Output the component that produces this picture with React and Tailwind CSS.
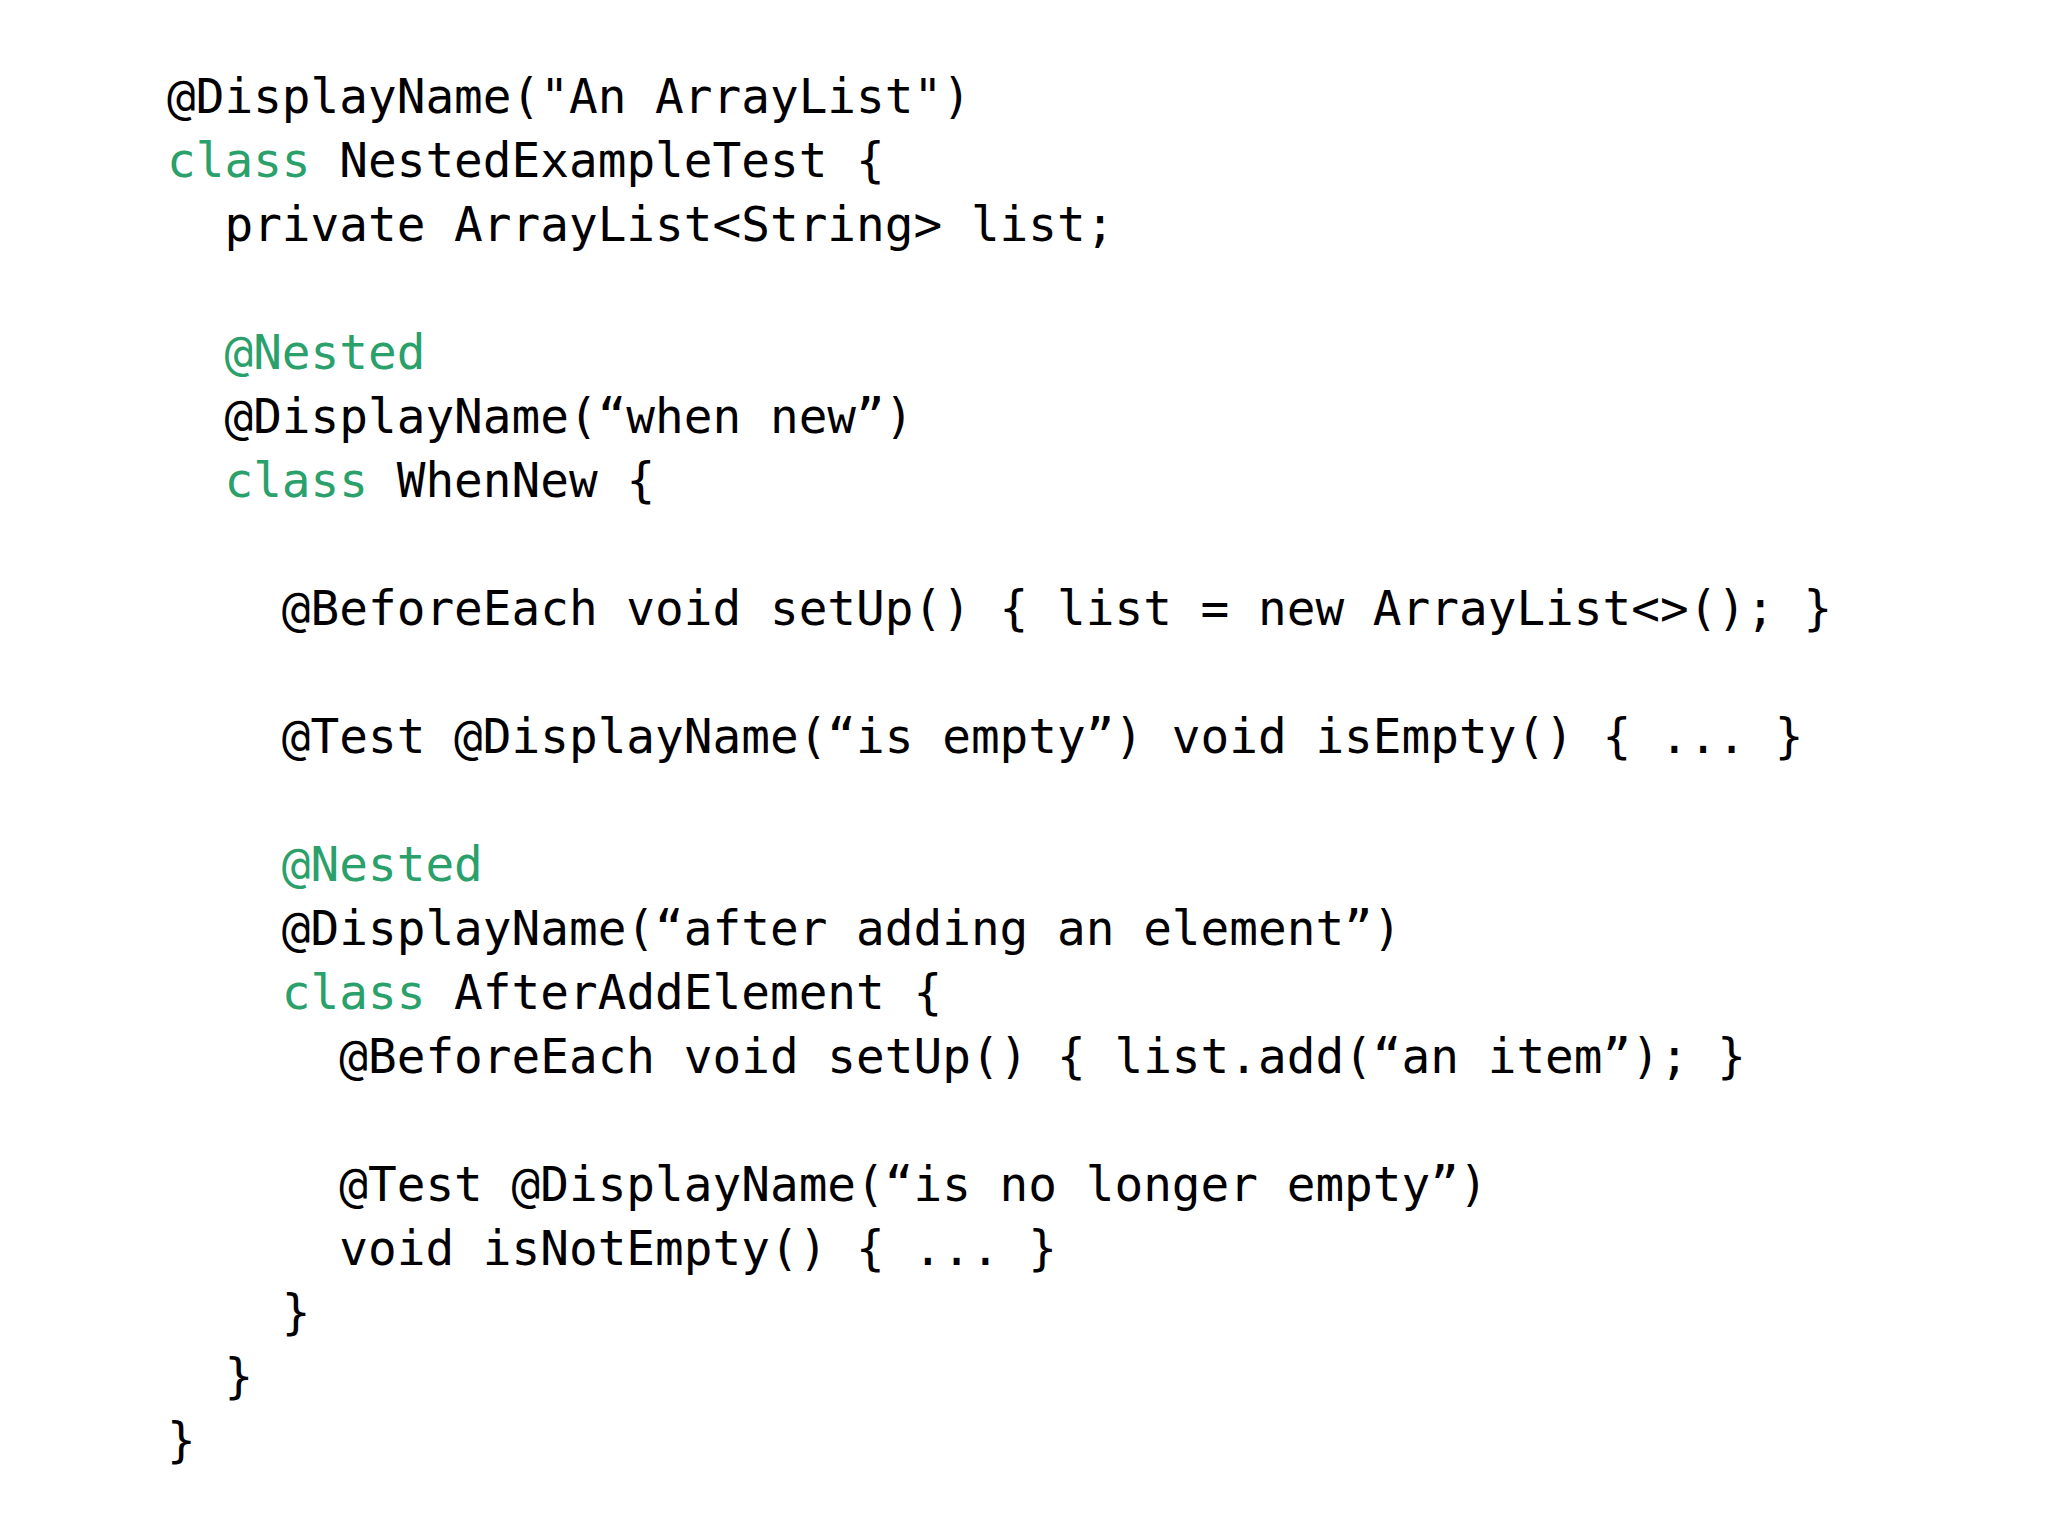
const GREEN = 'text-[#2aa06a]'

// each line: array of [text, isKeyword]
const LINES = [
  [['@DisplayName("An ArrayList")']],
  [['class', true], [' NestedExampleTest {']],
  [['  private ArrayList<String> list;']],
  [],
  [['  '], ['@Nested', true]],
  [['  @DisplayName(“when new”)']],
  [['  '], ['class', true], [' WhenNew {']],
  [],
  [['    @BeforeEach void setUp() { list = new ArrayList<>(); }']],
  [],
  [['    @Test @DisplayName(“is empty”) void isEmpty() { ... }']],
  [],
  [['    '], ['@Nested', true]],
  [['    @DisplayName(“after adding an element”)']],
  [['    '], ['class', true], [' AfterAddElement {']],
  [['      @BeforeEach void setUp() { list.add(“an item”); }']],
  [],
  [['      @Test @DisplayName(“is no longer empty”)']],
  [['      void isNotEmpty() { ... }']],
  [['    }']],
  [['  }']],
  [['}']],
]

const App = () => {
  return (
    <div className="w-[2048px] h-[1536px] bg-white pt-[65px] pl-[167px]">
      <pre className="font-['DejaVu_Sans_Mono',monospace] text-[47.7px] leading-[64px] text-black">
        {LINES.map((line, i) => (
          <div key={i} className="h-[64px] whitespace-pre">
            {line.map(([text, kw], j) => (
              <span key={j} className={kw ? GREEN : ''}>{text}</span>
            ))}
          </div>
        ))}
      </pre>
    </div>
  )
}

export default App
